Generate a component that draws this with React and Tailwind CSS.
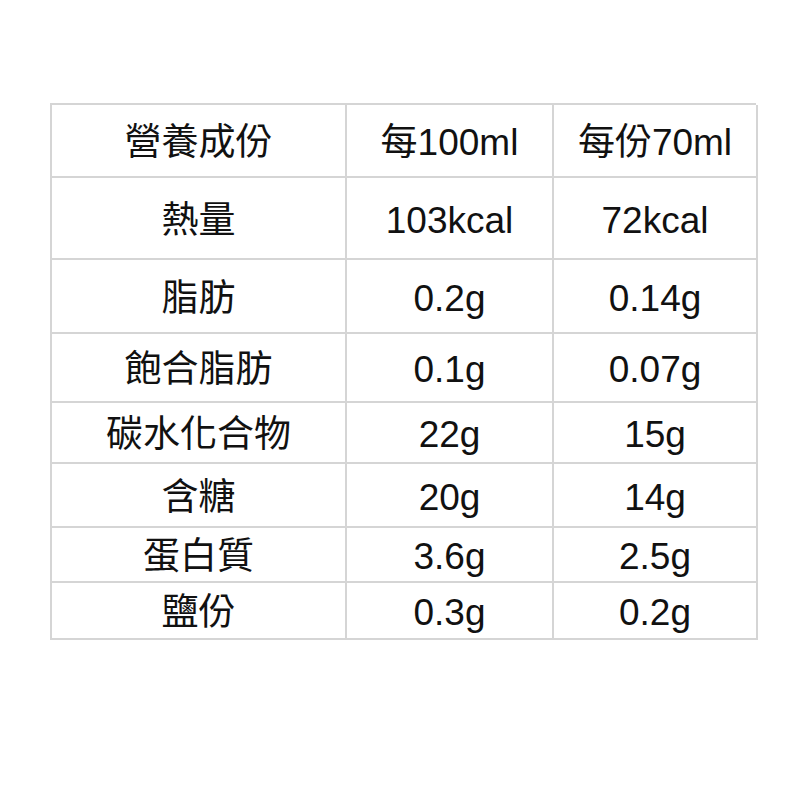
import React from 'react';

const rows = [
    { h: 'h-[73px]', cells: ['營養成份', '每100ml', '每份70ml'] },
    { h: 'h-[82px]', cells: ['熱量', '103kcal', '72kcal'] },
    { h: 'h-[74px]', cells: ['脂肪', '0.2g', '0.14g'] },
    { h: 'h-[69px]', cells: ['飽合脂肪', '0.1g', '0.07g'] },
    { h: 'h-[61px]', cells: ['碳水化合物', '22g', '15g'] },
    { h: 'h-[64px]', cells: ['含糖', '20g', '14g'] },
    { h: 'h-[55px]', cells: ['蛋白質', '3.6g', '2.5g'] },
    { h: 'h-[57px]', cells: ['鹽份', '0.3g', '0.2g'] },
];

const App = () => {
    return (
        <div className="w-[800px] h-[800px] bg-white pt-[103px] pl-[50px] font-['Liberation_Sans','Noto_Sans_CJK_TC',sans-serif] text-[#111]">
            <div className="w-[706px] border-t-2 border-l-2 border-[#d5d5d5]">
                {rows.map((row, i) => (
                    <div key={i} className={`grid grid-cols-[295px_207px_204px] ${row.h}`}>
                        {row.cells.map((c, j) => (
                            <div
                                key={j}
                                className="flex items-center justify-center pt-[4px] border-r-2 border-b-2 border-[#d5d5d5] text-[37px] leading-none"
                            >
                                {c}
                            </div>
                        ))}
                    </div>
                ))}
            </div>
        </div>
    );
};

export default App;
